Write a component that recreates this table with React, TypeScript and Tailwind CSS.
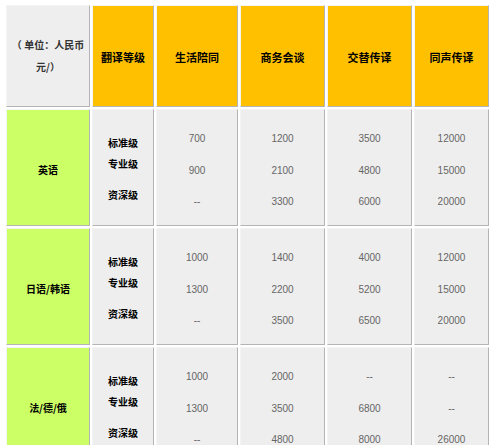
const cjk = "font-['SimSun','Noto_Sans_CJK_SC',sans-serif]";

type Group = {
  lang: string;
  values: string[][]; // per column: 标准/专业/资深
};

const groups: Group[] = [
  {
    lang: "英语",
    values: [
      ["700", "900", "--"],
      ["1200", "2100", "3300"],
      ["3500", "4800", "6000"],
      ["12000", "15000", "20000"],
    ],
  },
  {
    lang: "日语/韩语",
    values: [
      ["1000", "1300", "--"],
      ["1400", "2200", "3500"],
      ["4000", "5200", "6500"],
      ["12000", "15000", "20000"],
    ],
  },
  {
    lang: "法/德/俄",
    values: [
      ["1000", "1300", "--"],
      ["2000", "3500", "4800"],
      ["--", "6800", "8000"],
      ["--", "--", "26000"],
    ],
  },
];

const heads = ["生活陪同", "商务会谈", "交替传译", "同声传译"];
const widths = ["w-[82px]", "w-[85px]", "w-[85px]", "w-[75px]"];

const cell =
  "border-t border-l border-t-[#f4f4f4] border-l-[#f4f4f4] border-r border-b border-r-[#b4b4b4] border-b-[#b4b4b4] align-middle text-center p-0";

export default function App() {
  return (
    <div className="bg-white w-[500px] h-[445px] overflow-hidden pl-1 pt-[3px]">
      <table className="border-separate border-spacing-0.5">
        <thead>
          <tr className="h-[102px]">
            <th className={`${cell} w-[84px] bg-[#eeeeee]`}>
              <div className={`${cjk} text-[10px] font-bold leading-[22px] text-[#333]`}>
                （ 单位：人民币
                <br />
                元/）
              </div>
            </th>
            <th className={`${cell} w-[62px] bg-[#ffc000]`}>
              <span className={`${cjk} text-[11px] font-bold text-black`}>翻译等级</span>
            </th>
            {heads.map((h, i) => (
              <th key={h} className={`${cell} ${widths[i]} bg-[#ffc000]`}>
                <span className={`${cjk} text-[11px] font-bold text-black`}>{h}</span>
              </th>
            ))}
          </tr>
        </thead>
        <tbody>
          {groups.map((g) => (
            <tr key={g.lang} className="h-[117px]">
              <td className={`${cell} bg-[#ccff66]`}>
                <span className={`${cjk} text-[10px] font-bold text-black`}>{g.lang}</span>
              </td>
              <td className={`${cell} bg-[#eeeeee]`}>
                <div className={`${cjk} text-[10px] font-bold text-black leading-[21px] pt-[2px]`}>
                  <div>标准级</div>
                  <div>专业级</div>
                  <div className="mt-[10px]">资深级</div>
                </div>
              </td>
              {g.values.map((col, ci) => (
                <td key={ci} className={`${cell} bg-[#eeeeee]`}>
                  <div className="font-['Liberation_Sans',sans-serif] text-[10px] text-[#666] leading-[31.5px] pt-[6px]">
                    {col.map((v, vi) => (
                      <div key={vi}>{v}</div>
                    ))}
                  </div>
                </td>
              ))}
            </tr>
          ))}
        </tbody>
      </table>
    </div>
  );
}
